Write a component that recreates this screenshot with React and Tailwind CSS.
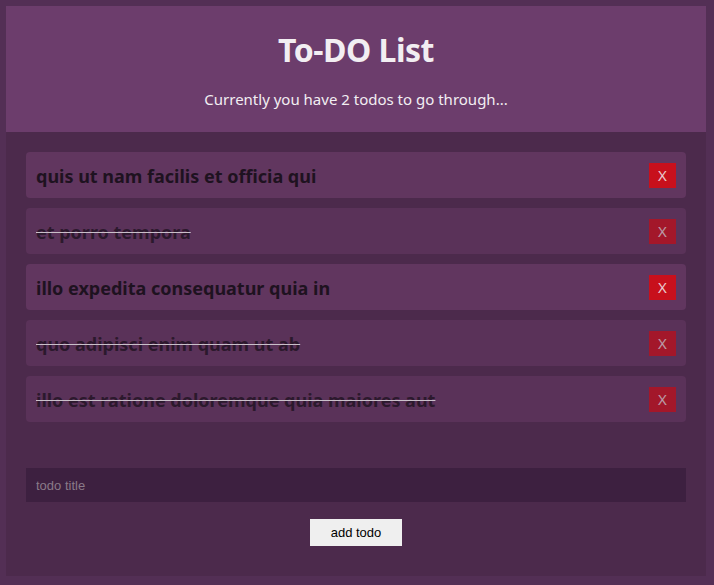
import React from "react";

const todos = [
  { title: "quis ut nam facilis et officia qui", done: false },
  { title: "et porro tempora", done: true },
  { title: "illo expedita consequatur quia in", done: false },
  { title: "quo adipisci enim quam ut ab", done: true },
  { title: "illo est ratione doloremque quia maiores aut", done: true },
];

export default function App() {
  return (
    <div className="min-h-[585px] w-[714px] bg-[#532f55] pt-[6px] pl-[6px]" style={{ fontFamily: '"Noto Sans", "Open Sans", sans-serif' }}>
      <div className="w-[700px] h-[570px] bg-[#4c2a4c] flex flex-col">
        <div className="h-[126px] bg-[#6c3d6c] flex flex-col items-center text-[#f2eef2]">
          <h1 className="mt-[25px] text-[32px] leading-[38px] font-bold tracking-[-0.5px]">To-DO List</h1>
          <p className="mt-[20px] text-[15px] leading-[20px]">Currently you have 2 todos to go through...</p>
        </div>
        <div className="px-[20px] pt-[20px] flex flex-col">
          <div className="flex flex-col gap-[10px]">
            {todos.map((t, i) => (
              <div
                key={i}
                className={
                  "h-[46px] rounded-[4px] bg-[#61365f] flex items-center justify-between pl-[10px] pr-[10px] " +
                  (t.done ? "opacity-70" : "")
                }
              >
                <span
                  className={
                    "text-[18px] leading-[24px] pt-[2px] font-bold text-[#1e1220] " +
                    (t.done ? "line-through decoration-white" : "")
                  }
                >
                  {t.title}
                </span>
                <button className="w-[27px] h-[25px] bg-[#c8101c] text-[#e8c8cc] text-[15px] flex items-center justify-center">
                  X
                </button>
              </div>
            ))}
          </div>
          <input
            placeholder="todo title"
            className="mt-[46px] h-[34px] bg-[#3d2040] px-[10px] text-[13px] text-[#ddd] placeholder:text-[#8a7a88] outline-none"
            style={{ fontFamily: '"Liberation Sans", Arial, sans-serif' }}
          />
          <div className="flex justify-center mt-[17px]">
            <button
              className="w-[92px] h-[27px] bg-[#efefef] text-[13px] text-black"
              style={{ fontFamily: '"Liberation Sans", Arial, sans-serif' }}
            >
              add todo
            </button>
          </div>
        </div>
      </div>
    </div>
  );
}
